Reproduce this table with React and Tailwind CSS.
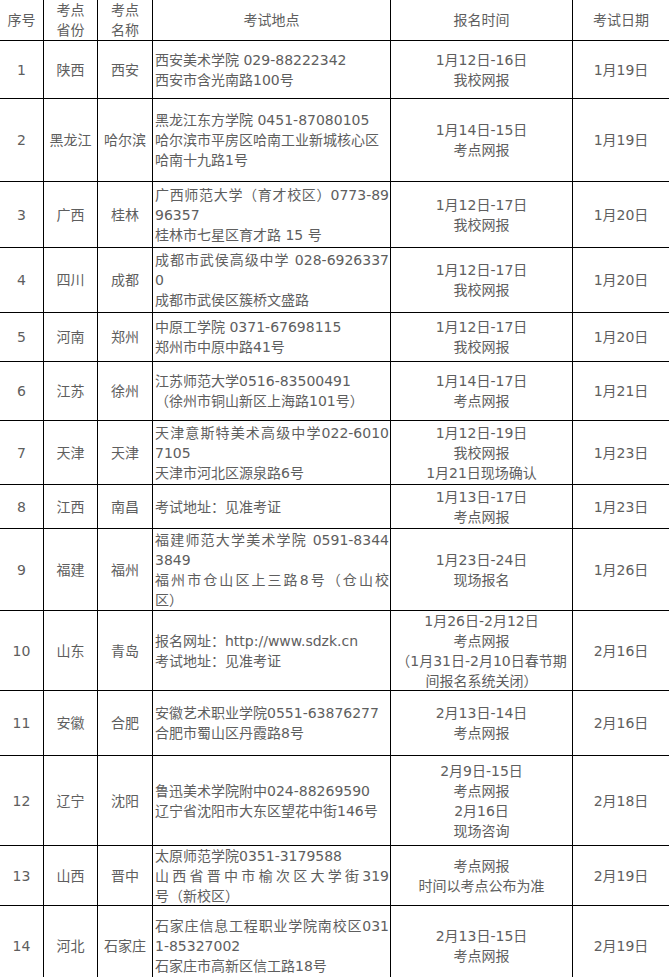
const rows = [
  { h: "h-[58px]", no: "1", prov: "陕西", city: "西安", addr: [["西安美术学院 029-88222342"], ["西安市含光南路100号"]], reg: ["1月12日-16日", "我校网报"], date: "1月19日" },
  { h: "h-[83px]", no: "2", prov: "黑龙江", city: "哈尔滨", addr: [["黑龙江东方学院 0451-87080105"], ["哈尔滨市平房区哈南工业新城核心区"], ["哈南十九路1号"]], reg: ["1月14日-15日", "考点网报"], date: "1月19日" },
  { h: "h-[66px]", no: "3", prov: "广西", city: "桂林", addr: [["广西师范大学（育才校区）0773-89", true], ["96357"], ["桂林市七星区育才路 15 号"]], reg: ["1月12日-17日", "我校网报"], date: "1月20日" },
  { h: "h-[65px]", no: "4", prov: "四川", city: "成都", addr: [["成都市武侯高级中学 028-6926337", true], ["0"], ["成都市武侯区簇桥文盛路"]], reg: ["1月12日-17日", "我校网报"], date: "1月20日" },
  { h: "h-[49px]", no: "5", prov: "河南", city: "郑州", addr: [["中原工学院 0371-67698115"], ["郑州市中原中路41号"]], reg: ["1月12日-17日", "我校网报"], date: "1月20日" },
  { h: "h-[59px]", no: "6", prov: "江苏", city: "徐州", addr: [["江苏师范大学0516-83500491"], ["（徐州市铜山新区上海路101号）"]], reg: ["1月14日-17日", "考点网报"], date: "1月21日" },
  { h: "h-[64px]", no: "7", prov: "天津", city: "天津", addr: [["天津意斯特美术高级中学022-6010", true], ["7105"], ["天津市河北区源泉路6号"]], reg: ["1月12日-19日", "我校网报", "1月21日现场确认"], date: "1月23日" },
  { h: "h-[44px]", no: "8", prov: "江西", city: "南昌", addr: [["考试地址：见准考证"]], reg: ["1月13日-17日", "考点网报"], date: "1月23日" },
  { h: "h-[82px]", no: "9", prov: "福建", city: "福州", addr: [["福建师范大学美术学院 0591-8344", true], ["3849"], ["福州市仓山区上三路8号（仓山校", true], ["区）"]], reg: ["1月23日-24日", "现场报名"], date: "1月26日" },
  { h: "h-[80px]", no: "10", prov: "山东", city: "青岛", addr: [["报名网址：http://www.sdzk.cn"], ["考试地址：见准考证"]], reg: ["1月26日-2月12日", "考点网报", "（1月31日-2月10日春节期", "间报名系统关闭）"], date: "2月16日" },
  { h: "h-[65px]", no: "11", prov: "安徽", city: "合肥", addr: [["安徽艺术职业学院0551-63876277"], ["合肥市蜀山区丹霞路8号"]], reg: ["2月13日-14日", "考点网报"], date: "2月16日" },
  { h: "h-[90px]", no: "12", prov: "辽宁", city: "沈阳", addr: [["鲁迅美术学院附中024-88269590"], ["辽宁省沈阳市大东区望花中街146号"]], reg: ["2月9日-15日", "考点网报", "2月16日", "现场咨询"], date: "2月18日" },
  { h: "h-[60px]", no: "13", prov: "山西", city: "晋中", addr: [["太原师范学院0351-3179588"], ["山西省晋中市榆次区大学街319", true], ["号（新校区）"]], reg: ["考点网报", "时间以考点公布为准"], date: "2月19日" },
  { h: "h-[80px]", no: "14", prov: "河北", city: "石家庄", addr: [["石家庄信息工程职业学院南校区031", true], ["1-85327002"], ["石家庄市高新区信工路18号"]], reg: ["2月13日-15日", "考点网报"], date: "2月19日" },
];

// full-width brackets get a full 14px box, as in the source page
const Txt = ({ t }) =>
  t.split(/([（）])/).map((p, i) =>
    p === "（" || p === "）" ? (
      <span key={i} className="inline-block w-[14px] text-center">
        {p}
      </span>
    ) : (
      p
    )
  );

const Cell = ({ w, children, last }) => (
  <div
    className={`${w} shrink-0 flex flex-col items-center justify-center text-center ${
      last ? "" : "border-r border-black"
    }`}
  >
    {children}
  </div>
);

export default function App() {
  return (
    <div className="w-[669px] h-[977px] overflow-hidden bg-white text-[14px] leading-[20px] text-[#5e5e5e] font-['DejaVu_Sans','Noto_Sans_CJK_SC',sans-serif]">
      {/* header */}
      <div className="flex h-[41px] border-b border-black">
        <Cell w="w-[44px]">序号</Cell>
        <Cell w="w-[54px]">
          <div>考点</div>
          <div>省份</div>
        </Cell>
        <Cell w="w-[55px]">
          <div>考点</div>
          <div>名称</div>
        </Cell>
        <Cell w="w-[238px]">考试地点</Cell>
        <Cell w="w-[182px]">报名时间</Cell>
        <Cell w="flex-1" last>
          考试日期
        </Cell>
      </div>

      {rows.map((r) => (
        <div key={r.no} className={`flex ${r.h} border-b border-black`}>
          <Cell w="w-[44px]">{r.no}</Cell>
          <Cell w="w-[54px]">{r.prov}</Cell>
          <Cell w="w-[55px]">{r.city}</Cell>
          <div className="w-[238px] shrink-0 border-r border-black flex flex-col justify-center pl-[2px] pr-[1px]">
            {r.addr.map(([t, just], i) => (
              <div
                key={i}
                className={`whitespace-nowrap ${just ? "[text-align-last:justify]" : ""}`}
              >
                <Txt t={t} />
              </div>
            ))}
          </div>
          <Cell w="w-[182px]">
            {r.reg.map((t, i) => (
              <div key={i} className="whitespace-nowrap">
                <Txt t={t} />
              </div>
            ))}
          </Cell>
          <Cell w="flex-1" last>
            {r.date}
          </Cell>
        </div>
      ))}
    </div>
  );
}
